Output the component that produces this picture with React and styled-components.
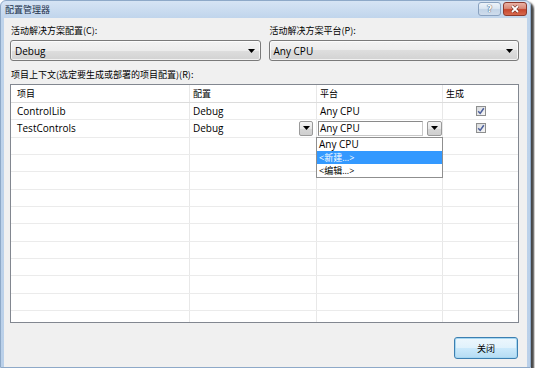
import React from "react";
import styled, { createGlobalStyle } from "styled-components";

const latin = `"Open Sans", "Noto Sans CJK SC", sans-serif`;
const cjk = `"Noto Sans CJK SC", "Open Sans", sans-serif`;

const GlobalStyle = createGlobalStyle`
  html, body {
    margin: 0;
    padding: 0;
    background: #fff;
  }
  body {
    font-family: ${latin};
    color: #000;
  }
`;

const Window = styled.div`
  box-sizing: border-box;
  width: 531px;
  height: 368px;
  border: 1px solid #8ea9c8;
  border-radius: 6px 6px 0 0;
  background: linear-gradient(#d6e4f4, #bfd4eb 18px, #bad0e9);
  box-shadow: 2px 3px 2px 1px rgba(0, 0, 0, 0.72);
  padding: 0 3px;
  display: flex;
  flex-direction: column;
`;

const TitleBar = styled.div`
  height: 17px;
  display: flex;
  align-items: flex-start;
  justify-content: space-between;
`;

const Title = styled.div`
  font-family: ${cjk};
  font-size: 9px;
  color: #1b2f4a;
  padding: 3px 0 0 1px;
  line-height: 12px;
`;

const CaptionButtons = styled.div`
  display: flex;
  gap: 2px;
  padding-top: 1px;
`;

const CaptionBtn = styled.div`
  box-sizing: border-box;
  width: ${(p) => p.$w}px;
  height: 14px;
  border-radius: 3px;
  border: 1px solid ${(p) => (p.$danger ? "#8d3a2d" : "#8aa2c0")};
  background: ${(p) =>
    p.$danger
      ? "linear-gradient(#eab1a4, #d88a79 45%, #c7472f 55%, #d66a4f)"
      : "linear-gradient(#eef3f9, #dbe6f2 45%, #c3d4e7 55%, #cfdcec)"};
  display: flex;
  align-items: center;
  justify-content: center;
  font-family: "DejaVu Sans", sans-serif;
  font-size: 9px;
  font-weight: bold;
  color: #fff;
  text-shadow: 0 0 1px #39506e, 0 0 1px #39506e;
`;

const Client = styled.div`
  flex: 1;
  background: #f0f0f0;
  padding: 6px 8px 8px 6px;
  display: flex;
  flex-direction: column;
`;

const ComboRow = styled.div`
  display: grid;
  grid-template-columns: 1fr 1fr;
  gap: 8px;
`;

const Field = styled.div`
  display: flex;
  flex-direction: column;
  gap: 2px;
`;

const Label = styled.div`
  font-family: ${cjk};
  font-size: 9px;
  line-height: 14px;
  height: 14px;
  padding-left: 1px;
  color: #000;
  margin-top: ${(p) => p.$mt || 0}px;
`;

const Combo = styled.div`
  box-sizing: border-box;
  height: 21px;
  border: 1px solid #7a7a7a;
  border-radius: 3px;
  background: linear-gradient(#f3f3f3 0%, #ececec 50%, #dedede 50%, #d2d2d2 100%);
  box-shadow: inset 0 0 0 1px rgba(255, 255, 255, 0.7);
  display: flex;
  align-items: center;
  justify-content: space-between;
  padding: 0 5px 0 4px;
  font-size: 10px;
`;

const Arrow = () => (
  <svg width="7" height="4" viewBox="0 0 7 4">
    <path d="M0 0 H7 L3.5 4 Z" fill="#000" />
  </svg>
);

const Grid = styled.div`
  box-sizing: border-box;
  height: 239px;
  margin-top: 2px;
  border: 1px solid #828790;
  background: #fff;
  overflow: hidden;
`;

const cols = "179px 127px 126px 1fr";

const HeaderRow = styled.div`
  box-sizing: border-box;
  display: grid;
  grid-template-columns: ${cols};
  height: 18px;
  border-bottom: 1px solid #dcdcdc;
`;

const Row = styled.div`
  box-sizing: border-box;
  display: grid;
  grid-template-columns: ${cols};
  height: 17.33px;
  border-bottom: 1px solid #ebebeb;
`;

const Cell = styled.div`
  position: relative;
  display: flex;
  align-items: center;
  justify-content: ${(p) => (p.$center ? "center" : "flex-start")};
  padding-left: ${(p) => p.$pl ?? 3}px;
  font-family: ${(p) => (p.$cjk ? cjk : latin)};
  font-size: ${(p) => (p.$cjk ? 9 : 10)}px;
  white-space: nowrap;
  &:not(:last-child) {
    border-right: 1px solid #e8e8e8;
  }
`;

const CellText = styled.span`
  flex: ${(p) => (p.$grow ? 1 : "none")};
`;

const DropBtn = styled.div`
  box-sizing: border-box;
  width: ${(p) => p.$w || 14}px;
  height: 15px;
  margin-right: ${(p) => p.$mr || 0}px;
  border: 1px solid #9a9a9a;
  border-radius: 2px;
  background: linear-gradient(#f6f6f6, #e6e6e6 50%, #d6d6d6 50%, #cfcfcf);
  display: flex;
  align-items: center;
  justify-content: center;
`;

const EditBox = styled.div`
  box-sizing: border-box;
  flex: 1;
  height: 15px;
  margin-right: 4px;
  border: 1px solid #8a8a8a;
  border-bottom-color: #c8c8c8;
  border-right-color: #c8c8c8;
  background: #fff;
  display: flex;
  align-items: center;
  padding-left: 1px;
  font-size: 10px;
`;

const DropList = styled.div`
  position: absolute;
  top: 100%;
  left: -1px;
  width: 127px;
  box-sizing: border-box;
  border: 1px solid #8f8f8f;
  background: #fff;
  z-index: 2;
  display: flex;
  flex-direction: column;
`;

const DropItem = styled.div`
  height: 13px;
  line-height: 13px;
  padding-left: 2px;
  font-family: ${latin};
  font-size: ${(p) => (p.$cjk ? 9 : 10)}px;
  background: ${(p) => (p.$active ? "#3399ff" : "transparent")};
  color: ${(p) => (p.$active ? "#fff" : "#000")};
`;

const CheckBox = styled.span`
  box-sizing: border-box;
  width: 10px;
  height: 10px;
  border: 1px solid #8e8f8f;
  background: linear-gradient(135deg, #d8dadc, #f6f6f6);
  display: flex;
  align-items: center;
  justify-content: center;
`;

const Footer = styled.div`
  display: flex;
  justify-content: flex-end;
  margin-top: 14px;
  padding-right: 1px;
`;

const Button = styled.button`
  box-sizing: border-box;
  width: 64px;
  height: 22px;
  border: 1px solid #3c7fb1;
  border-radius: 3px;
  background: linear-gradient(#edf7fd, #e0f2fc 48%, #cbe9fb 52%, #b5dcf3);
  box-shadow: inset 0 0 0 1px #a6d7f1;
  font-family: ${cjk};
  font-size: 9px;
  color: #000;
  padding: 0;
`;

const Check = () => (
  <CheckBox>
    <svg width="8" height="8" viewBox="0 0 8 8">
      <path d="M1.2 4.2 L3.2 6.4 L6.8 1.2" fill="none" stroke="#4c5f9c" strokeWidth="1.5" />
    </svg>
  </CheckBox>
);

const rows = [
  { name: "ControlLib", config: "Debug", platform: "Any CPU", build: true },
  { name: "TestControls", config: "Debug", platform: "Any CPU", build: true, editing: true },
];

const emptyRows = Array.from({ length: 11 });

export default function App() {
  return (
    <>
      <GlobalStyle />
      <Window>
        <TitleBar>
          <Title>配置管理器</Title>
          <CaptionButtons>
            <CaptionBtn $w={23}>?</CaptionBtn>
            <CaptionBtn $w={24} $danger>
              <svg width="10" height="8" viewBox="0 0 10 8">
                <path d="M2 1 L8 7 M8 1 L2 7" stroke="#6b2a20" strokeWidth="3" />
                <path d="M2 1 L8 7 M8 1 L2 7" stroke="#fff" strokeWidth="1.8" />
              </svg>
            </CaptionBtn>
          </CaptionButtons>
        </TitleBar>
        <Client>
          <ComboRow>
            <Field>
              <Label>活动解决方案配置(C):</Label>
              <Combo>
                Debug
                <Arrow />
              </Combo>
            </Field>
            <Field>
              <Label>活动解决方案平台(P):</Label>
              <Combo>
                Any CPU
                <Arrow />
              </Combo>
            </Field>
          </ComboRow>
          <Label $mt={7}>项目上下文(选定要生成或部署的项目配置)(R):</Label>
          <Grid>
            <HeaderRow>
              <Cell $cjk $pl={6}>项目</Cell>
              <Cell $cjk>配置</Cell>
              <Cell $cjk>平台</Cell>
              <Cell $cjk>生成</Cell>
            </HeaderRow>
            {rows.map((r) =>
              r.editing ? (
                <Row key={r.name}>
                  <Cell $pl={6}>{r.name}</Cell>
                  <Cell>
                    <CellText $grow>{r.config}</CellText>
                    <DropBtn $mr={3}>
                      <Arrow />
                    </DropBtn>
                  </Cell>
                  <Cell $pl={1}>
                    <EditBox>{r.platform}</EditBox>
                    <DropBtn $w={15}>
                      <Arrow />
                    </DropBtn>
                    <DropList>
                      <DropItem>Any CPU</DropItem>
                      <DropItem $active $cjk>&lt;新建...&gt;</DropItem>
                      <DropItem $cjk>&lt;编辑...&gt;</DropItem>
                    </DropList>
                  </Cell>
                  <Cell $center $pl={0}>
                    {r.build && <Check />}
                  </Cell>
                </Row>
              ) : (
                <Row key={r.name}>
                  <Cell $pl={6}>{r.name}</Cell>
                  <Cell>{r.config}</Cell>
                  <Cell>{r.platform}</Cell>
                  <Cell $center $pl={0}>
                    {r.build && <Check />}
                  </Cell>
                </Row>
              )
            )}
            {emptyRows.map((_, i) => (
              <Row key={i}>
                <Cell />
                <Cell />
                <Cell />
                <Cell />
              </Row>
            ))}
          </Grid>
          <Footer>
            <Button>关闭</Button>
          </Footer>
        </Client>
      </Window>
    </>
  );
}
